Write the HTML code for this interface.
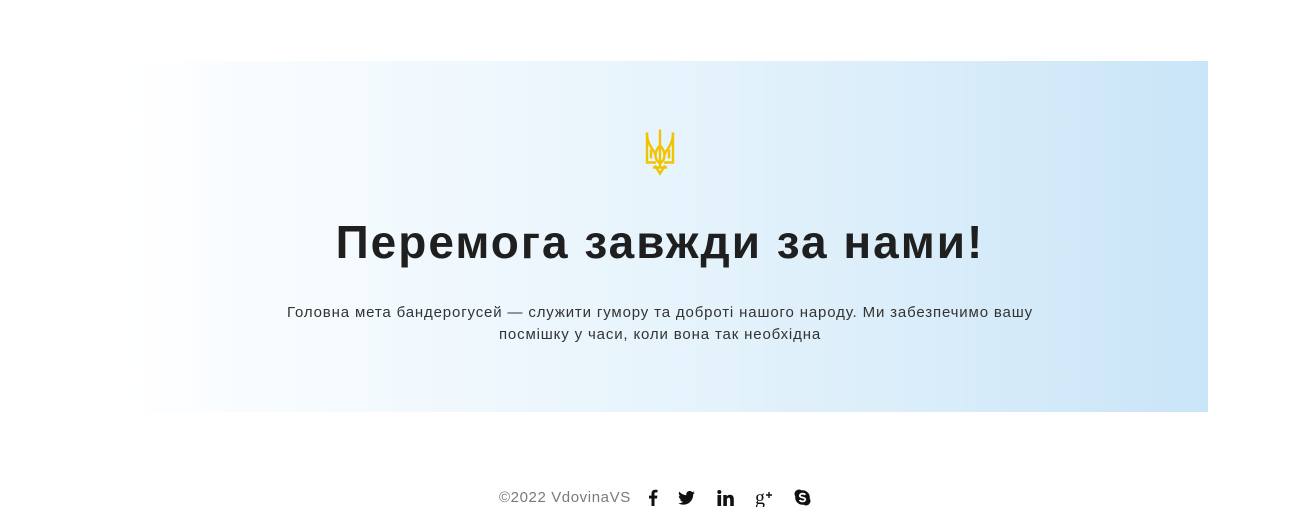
<!DOCTYPE html>
<html><head><meta charset="utf-8"><style>
html,body{margin:0;padding:0;background:#fff;width:1295px;height:513px;overflow:hidden;font-family:"Liberation Sans",sans-serif}
.box{position:absolute;left:126px;top:61px;width:1082px;height:351px;background:linear-gradient(90deg,#ffffff 0%,#fafdff 8%,#e9f5fc 45%,#d6ebf9 80%,#c9e5f8 100%)}
h1{position:absolute;left:0;top:215px;width:1320px;margin:0;text-align:center;font-size:46px;font-weight:600;color:#1f1f1f;letter-spacing:2px}
p{position:absolute;left:0;top:302px;width:1320px;margin:0;text-align:center;font-size:15px;line-height:22px;color:#333;letter-spacing:0.85px}
.foot{position:absolute;left:499px;top:488px;font-size:15px;color:#7a7a7a;display:flex;align-items:center;letter-spacing:0.6px}
</style></head><body>
<div class="box"></div>
<svg style="position:absolute;left:644px;top:127px" width="32" height="51" viewBox="0 0 32 50" fill="none" stroke="#f2c400" stroke-width="2.4">
<path d="M16 2 L16 40"/>
<path d="M3 5 L3 35 L12 35 M29 5 L29 35 L20 35"/>
<path d="M3 5 C3 18 10 22 12 28 M29 5 C29 18 22 22 20 28"/>
<path d="M16 18 C10 24 10 32 16 36 C22 32 22 24 16 18"/>
<path d="M11 38 L16 46 L21 38 M9 40 L23 40"/>
<path d="M7 22 L7 31 M25 22 L25 31"/>
</svg>
<h1>Перемога завжди за нами!</h1>
<p>Головна мета бандерогусей — служити гумору та доброті нашого народу. Ми забезпечимо вашу<br>посмішку у часи, коли вона так необхідна</p>
<div class="foot"><span>©2022 VdovinaVS</span>
<svg style="margin-left:17px" width="10" height="17" viewBox="0 0 10 17"><path d="M6.5 17V9.5H9L9.4 6.6H6.5V4.8C6.5 4 6.7 3.4 7.9 3.4H9.5V0.8C9.2 0.8 8.3 0.7 7.2 0.7 5 0.7 3.5 2 3.5 4.5V6.6H1V9.5H3.5V17Z" fill="#111"/></svg>
<svg style="margin-left:20px" width="17" height="14" viewBox="0 0 24 20"><path d="M24 2.4a9.8 9.8 0 0 1-2.8.8A4.9 4.9 0 0 0 23.3.4a9.9 9.9 0 0 1-3.1 1.2A4.9 4.9 0 0 0 11.8 6 14 14 0 0 1 1.7.9a4.9 4.9 0 0 0 1.5 6.6A4.9 4.9 0 0 1 1 6.9 4.9 4.9 0 0 0 4.9 11.8a4.9 4.9 0 0 1-2.2.1 4.9 4.9 0 0 0 4.6 3.4A9.9 9.9 0 0 1 0 17.3 14 14 0 0 0 7.5 19.5c9.1 0 14-7.5 14-14v-.6A10 10 0 0 0 24 2.4z" fill="#111"/></svg>
<svg style="margin-left:22px" width="17" height="16" viewBox="0 0 17 16"><rect x="0.5" y="5" width="3.6" height="11" fill="#111"/><circle cx="2.3" cy="2" r="2" fill="#111"/><path d="M6.3 5H9.7V6.6C10.3 5.6 11.4 4.8 13 4.8 16 4.8 16.8 6.8 16.8 9.5V16H13.2V10.2C13.2 8.8 12.9 7.8 11.6 7.8 10.2 7.8 9.9 8.9 9.9 10.2V16H6.3Z" fill="#111"/></svg>
<svg style="margin-left:21px" width="19" height="19" viewBox="0 0 19 19"><text x="0" y="16" font-family="Liberation Serif,serif" font-size="20" fill="#111">g</text><path d="M14 4V10M11 7H17" stroke="#111" stroke-width="1.4"/></svg>
<svg style="margin-left:20px" width="17" height="17" viewBox="0 0 17 17"><circle cx="5" cy="5" r="4.5" fill="#111"/><circle cx="12" cy="12" r="4.5" fill="#111"/><circle cx="8.5" cy="8.5" r="7.3" fill="#111"/><path d="M11.3 5.8C10.6 5 9.6 4.7 8.5 4.7 7 4.7 5.8 5.5 5.8 6.7 5.8 9 11.3 8 11.3 10.4 11.3 11.6 10 12.4 8.5 12.4 7.2 12.4 6.2 11.9 5.6 11" stroke="#fff" stroke-width="1.8" fill="none"/></svg>
</div>
</body></html>
